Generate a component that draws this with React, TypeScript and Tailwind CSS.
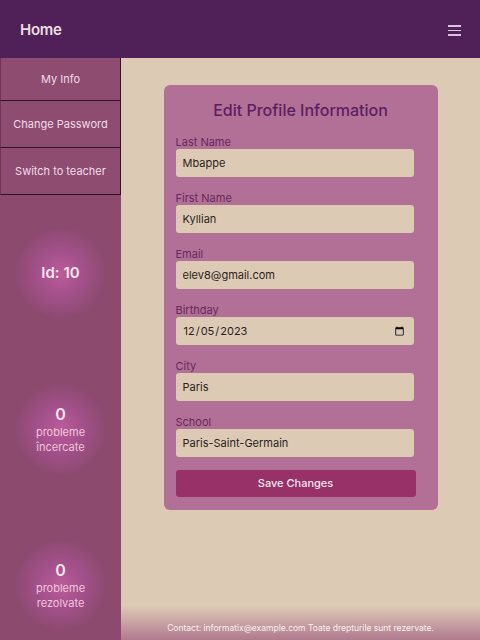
import React, { useState } from 'react';

const fields = [
  { label: 'Last Name', name: 'lastName', type: 'text', value: 'Mbappe' },
  { label: 'First Name', name: 'firstName', type: 'text', value: 'Kyllian' },
  { label: 'Email', name: 'email', type: 'email', value: 'elev8@gmail.com' },
  { label: 'Birthday', name: 'birthday', type: 'date', value: '2023-12-05' },
  { label: 'City', name: 'city', type: 'text', value: 'Paris' },
  { label: 'School', name: 'school', type: 'text', value: 'Paris-Saint-Germain' }
];

const Stat = ({ value, lines }: { value: string; lines?: string[] }) => (
  <div className="h-[100px] w-full flex flex-col items-center justify-center bg-[radial-gradient(circle,#bb5c99_0%,#a2508a_30%,rgba(139,74,110,0)_60%)]">
    <div className={lines ? 'text-[16px] font-semibold text-[#f3e3ea] leading-[22px]' : 'text-[15px] font-semibold text-[#f3e3ea]'}>
      {value}
    </div>
    {lines &&
      lines.map(l => (
        <div key={l} className="text-[11px] leading-[15px] text-[#f2c4dc]">
          {l}
        </div>
      ))}
  </div>
);

export default function App() {
  const [form, setForm] = useState<Record<string, string>>(
    Object.fromEntries(fields.map(f => [f.name, f.value]))
  );

  return (
    <div className="w-[480px] h-[640px] flex flex-col overflow-hidden font-['Inter',sans-serif]">
      <header className="h-[58px] shrink-0 bg-[#502059] flex items-center justify-between pl-[20px] pr-[19px] pt-[3px]">
        <span className="text-[15px] font-semibold tracking-[-0.3px] text-[#ecdfe0]">Home</span>
        <div className="flex flex-col gap-[3px]">
          <span className="block w-[13px] h-[1.5px] bg-[#d9c3d8]" />
          <span className="block w-[13px] h-[1.5px] bg-[#d9c3d8]" />
          <span className="block w-[13px] h-[1.5px] bg-[#d9c3d8]" />
        </div>
      </header>

      <div className="flex flex-1 min-h-0">
        <aside className="w-[121px] shrink-0 bg-[#8b4a6e] flex flex-col">
          {['My Info', 'Change Password', 'Switch to teacher'].map((item, i) => (
            <button
              key={item}
              className={
                i === 0
                  ? 'h-[43px] border border-t-0 border-l-[#6e3558] border-[#2e1426] text-[11px] text-[#f3dbe8] bg-[#8d4c70]'
                  : 'h-[47px] border border-t-0 border-l-[#6e3558] border-[#2e1426] text-[11px] text-[#f3dbe8] bg-[#8d4c70]'
              }
            >
              {item}
            </button>
          ))}
          <div className="flex flex-col pt-[28px] gap-[56px]">
            <Stat value="Id: 10" />
            <Stat value="0" lines={['probleme', 'încercate']} />
            <Stat value="0" lines={['probleme', 'rezolvate']} />
          </div>
        </aside>

        <main className="flex-1 bg-[#ddcab5] flex flex-col">
          <div className="flex-1 flex justify-center pt-[27px]">
            <form
              className="w-[274px] h-[425px] bg-[#b37096] rounded-[6px] px-[12px] pt-[13px] flex flex-col"
              onSubmit={e => e.preventDefault()}
            >
              <h2 className="text-center text-[16px] font-medium text-[#5a1f60] mb-[13px]">
                Edit Profile Information
              </h2>
              <div className="flex flex-col gap-[14px]">
                {fields.map(f => (
                  <label key={f.name} className="flex flex-col">
                    <span className="text-[11px] leading-[14px] text-[#66285f]">{f.label}</span>
                    <input
                      type={f.type}
                      value={form[f.name]}
                      onChange={e => setForm(prev => ({ ...prev, [f.name]: e.target.value }))}
                      className="w-[238px] h-[28px] rounded-[3px] bg-[#ddcab5] px-[7px] text-[11px] text-[#2a1f22] outline-none"
                    />
                  </label>
                ))}
              </div>
              <button
                type="submit"
                className="mt-[13px] w-[240px] h-[27px] rounded-[3px] bg-[#973168] text-[11px] font-medium text-[#f5e6ee]"
              >
                Save Changes
              </button>
            </form>
          </div>
          <footer className="h-[34px] shrink-0 bg-gradient-to-b from-[#ddcab5] to-[#b07a8f] flex items-end justify-center pb-[5px]">
            <span className="text-[8.5px] text-[#fbf1f4]">
              Contact: informatix@example.com Toate drepturile sunt rezervate.
            </span>
          </footer>
        </main>
      </div>
    </div>
  );
}
